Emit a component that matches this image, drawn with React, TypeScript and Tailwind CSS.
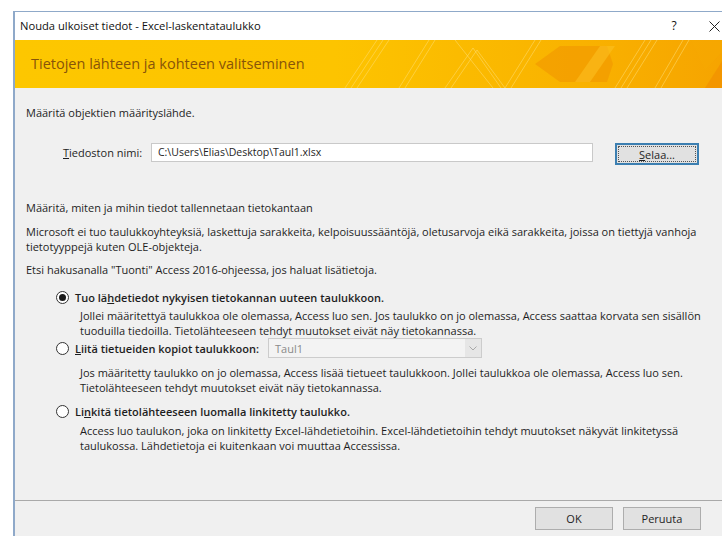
import React from "react";

const font = { fontFamily: '"Open Sans", "Noto Sans", sans-serif' };

function Radio({ checked }: { checked?: boolean }) {
  return (
    <span className="w-[13px] h-[13px] rounded-full border border-[#333] bg-white flex items-center justify-center shrink-0">
      {checked && <span className="w-[7px] h-[7px] rounded-full bg-[#1a1a1a]" />}
    </span>
  );
}

function BannerArt() {
  return (
    <svg className="absolute inset-0" width="709" height="48" viewBox="0 0 709 48" preserveAspectRatio="none">
      <defs>
        <linearGradient id="bg" x1="0" x2="1" y1="0" y2="0">
          <stop offset="0" stopColor="#fdc700" />
          <stop offset="0.45" stopColor="#fdc400" />
          <stop offset="0.8" stopColor="#f9b200" />
          <stop offset="1" stopColor="#f6a400" />
        </linearGradient>
      </defs>
      <rect width="709" height="48" fill="url(#bg)" />
      {/* thin diagonal stripes */}
      <g stroke="#ffe27a" strokeOpacity="0.5" strokeWidth="1">
        <line x1="330" y1="48" x2="362" y2="0" />
        <line x1="336" y1="48" x2="368" y2="0" />
        <line x1="342" y1="48" x2="374" y2="0" />
        <line x1="384" y1="48" x2="414" y2="0" />
        <line x1="390" y1="48" x2="420" y2="0" />
        <line x1="430" y1="48" x2="458" y2="8" />
        <line x1="458" y1="8" x2="486" y2="48" />
        <line x1="436" y1="48" x2="462" y2="10" />
        <line x1="462" y1="10" x2="490" y2="48" />
        <line x1="440" y1="0" x2="478" y2="48" />
        <line x1="520" y1="0" x2="490" y2="48" />
        <line x1="526" y1="0" x2="496" y2="48" />
        <line x1="600" y1="48" x2="630" y2="0" />
        <line x1="606" y1="48" x2="636" y2="0" />
        <line x1="612" y1="48" x2="642" y2="0" />
        <line x1="640" y1="48" x2="668" y2="0" />
        <line x1="646" y1="48" x2="674" y2="0" />
      </g>
      {/* orange chevron */}
      <polygon points="520,24 545,6 592,6 598,24 592,42 545,42" fill="#f29a00" fillOpacity="0.7" />
      <polygon points="560,42 585,6 600,6 575,42" fill="#fbbf20" fillOpacity="0.6" />
      <polygon points="690,48 709,18 709,48" fill="#f29200" fillOpacity="0.8" />
      <polygon points="676,0 709,0 709,10 690,30" fill="#f7a800" fillOpacity="0.7" />
    </svg>
  );
}

export default function App() {
  return (
    <div className="w-[722px] h-[536px] bg-white overflow-hidden text-[#1e1e1e]" style={font}>
      <div className="ml-[13px] mt-[11px] w-[709px] h-[525px] border-l-2 border-t border-[#8fa9c9] flex flex-col">
        {/* title bar */}
        <div className="h-[28px] bg-white flex items-center pl-[5px] text-[11.2px] text-[#111]">
          <span className="flex-1">Nouda ulkoiset tiedot - Excel-laskentataulukko</span>
          <span className="w-[12px] text-center text-[12px] mr-[29px]">?</span>
          <svg width="11" height="11" viewBox="0 0 11 11" className="mr-[2px]">
            <path d="M0.5 0.5 L10.5 10.5 M10.5 0.5 L0.5 10.5" stroke="#222" strokeWidth="1" fill="none" />
          </svg>
        </div>
        {/* banner */}
        <div className="relative h-[48px] overflow-hidden">
          <BannerArt />
          <div className="relative h-full flex items-center pl-[16px] text-[14.5px] text-[#87540a]">
            Tietojen lähteen ja kohteen valitseminen
          </div>
        </div>
        {/* body */}
        <div className="flex-1 bg-[#f0f0f0] flex flex-col text-[11px] leading-[15px]">
          <div className="pl-[11px] pt-[17px]">Määritä objektien määrityslähde.</div>
          <div className="flex items-start mt-[23px] pl-[48px]">
            <span className="leading-[19px] w-[88px]"><u>T</u>iedoston nimi:</span>
            <div className="w-[442px] h-[19px] bg-white border border-[#c9c9c9] pl-[6px] leading-[17px] text-[10.5px]">C:\Users\Elias\Desktop\Taul1.xlsx</div>
            <button className="ml-[22px] w-[84px] h-[22px] bg-[#e1e1e1] border-2 border-[#3c7fb1] outline outline-1 outline-offset-[-4px] outline-dotted outline-[#555] text-[11px]">
              <u>S</u>elaa...
            </button>
          </div>
          <div className="pl-[11px] mt-[35px]">Määritä, miten ja mihin tiedot tallennetaan tietokantaan</div>
          <div className="pl-[11px] pr-[6px] mt-[9px]">
            Microsoft ei tuo taulukkoyhteyksiä, laskettuja sarakkeita, kelpoisuussääntöjä, oletusarvoja eikä sarakkeita, joissa on tiettyjä vanhoja tietotyyppejä kuten OLE-objekteja.
          </div>
          <div className="pl-[11px] mt-[8px]">Etsi hakusanalla "Tuonti" Access 2016-ohjeessa, jos haluat lisätietoja.</div>

          <div className="pl-[41px] mt-[13px] flex items-center gap-[6px]">
            <Radio checked />
            <span className="font-semibold">Tuo lä<u>h</u>detiedot nykyisen tietokannan uuteen taulukkoon.</span>
          </div>
          <div className="pl-[65px] pr-[6px] mt-[3px]">
            Jollei määritettyä taulukkoa ole olemassa, Access luo sen. Jos taulukko on jo olemassa, Access saattaa korvata sen sisällön tuoduilla tiedoilla. Tietolähteeseen tehdyt muutokset eivät näy tietokannassa.
          </div>

          <div className="pl-[41px] mt-[0px] flex items-center gap-[6px] h-[20px]">
            <Radio />
            <span className="font-semibold w-[187px]"><u>L</u>iitä tietueiden kopiot taulukkoon:</span>
            <div className="w-[214px] h-[20px] border border-[#cccccc] bg-[#f3f3f3] flex items-center">
              <span className="flex-1 pl-[6px] text-[#8a8a8a]">Taul1</span>
              <span className="w-[16px] h-full bg-[#e6e6e6] flex items-center justify-center">
                <svg width="8" height="5" viewBox="0 0 8 5"><path d="M0.5 0.5 L4 4 L7.5 0.5" fill="none" stroke="#a8a8a8" strokeWidth="1" /></svg>
              </span>
            </div>
          </div>
          <div className="pl-[65px] pr-[6px] mt-[7px]">
            Jos määritetty taulukko on jo olemassa, Access lisää tietueet taulukkoon. Jollei taulukkoa ole olemassa, Access luo sen. Tietolähteeseen tehdyt muutokset eivät näy tietokannassa.
          </div>

          <div className="pl-[41px] mt-[9px] flex items-center gap-[6px]">
            <Radio />
            <span className="font-semibold">Li<u>n</u>kitä tietolähteeseen luomalla linkitetty taulukko.</span>
          </div>
          <div className="pl-[65px] pr-[6px] mt-[4px]">
            Access luo taulukon, joka on linkitetty Excel-lähdetietoihin. Excel-lähdetietoihin tehdyt muutokset näkyvät linkitetyssä taulukossa. Lähdetietoja ei kuitenkaan voi muuttaa Accessissa.
          </div>

          <div className="mt-auto border-t border-[#a9a9a9] h-[36px] flex items-center justify-end gap-[10px] pr-[21px]">
            <button className="w-[78px] h-[23px] bg-[#e1e1e1] border border-[#adadad]">OK</button>
            <button className="w-[78px] h-[23px] bg-[#e1e1e1] border border-[#adadad]">Peruuta</button>
          </div>
        </div>
      </div>
    </div>
  );
}
